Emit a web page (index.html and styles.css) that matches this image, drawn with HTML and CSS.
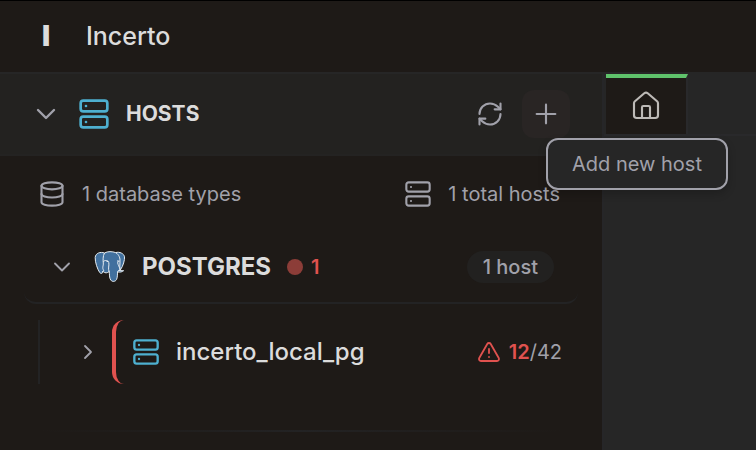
FILE: index.html
```html
<!DOCTYPE html>
<html lang="en">
<head>
<meta charset="utf-8">
<title>Incerto</title>
<link rel="stylesheet" href="styles.css">
</head>
<body>
<svg class="defs" aria-hidden="true">
  <symbol id="server" viewBox="0 0 24 24"><rect x="2" y="2" width="20" height="8" rx="2"/><rect x="2" y="14" width="20" height="8" rx="2"/><path d="M6 6h.01M6 18h.01"/></symbol>
  <symbol id="chevron-down" viewBox="0 0 24 24"><path d="m6 9 6 6 6-6"/></symbol>
  <symbol id="chevron-right" viewBox="0 0 24 24"><path d="m9 18 6-6-6-6"/></symbol>
</svg>
<div class="app">
  <header class="topbar">
    <span class="logo">I</span>
    <span class="brand">Incerto</span>
  </header>
  <div class="workspace">
    <aside class="sidebar">
      <div class="panel-head">
        <button class="toggle" aria-label="Collapse hosts"><svg class="icon i32"><use href="#chevron-down"/></svg></button>
        <svg class="icon i32 blue"><use href="#server"/></svg>
        <h1 class="panel-title">HOSTS</h1>
        <div class="actions">
          <button class="action" aria-label="Refresh"><svg class="icon i28" viewBox="0 0 24 24"><path d="M3 12a9 9 0 0 1 9-9 9.75 9.75 0 0 1 6.74 2.74L21 8"/><path d="M21 3v5h-5"/><path d="M21 12a9 9 0 0 1-9 9 9.75 9.75 0 0 1-6.74-2.74L3 16"/><path d="M8 16H3v5"/></svg></button>
          <div class="tip-anchor">
            <button class="action active" aria-label="Add host" aria-describedby="tip"><svg class="icon i32 thin" viewBox="0 0 24 24"><path d="M5 12h14M12 5v14"/></svg></button>
            <div class="tooltip" role="tooltip" id="tip">Add new host</div>
          </div>
        </div>
      </div>
      <div class="stats">
        <span class="stat"><svg class="icon i28" viewBox="0 0 24 24"><ellipse cx="12" cy="5" rx="9" ry="3"/><path d="M3 5v14a9 3 0 0 0 18 0V5"/><path d="M3 12a9 3 0 0 0 18 0"/></svg>1 database types</span>
        <span class="stat"><svg class="icon i28"><use href="#server"/></svg>1 total hosts</span>
      </div>
      <div class="group">
        <button class="toggle" aria-label="Collapse Postgres"><svg class="icon i28 thin"><use href="#chevron-down"/></svg></button>
        <svg class="elephant" viewBox="0 0 32 32" aria-hidden="true">
          <path class="shape" d="M10.500 2C6.500 .500 1.500 2 1.200 6.500c-.200 4.500 2.100 11.500 4.500 15 1.300 1.500 2.500 1 3.800-.800 1.500 1.600 3.700 1.500 5.700-.200.400 2.600-.100 6.200 1.600 8.600 1.500 2 4.500 1.600 5.700-.500 1.100-2.300.8-5 1.100-7.700 2.300.5 4.800 0 6-1.200-1-.4-2.500.200-3.400-.5 3.100-4.500 4.600-10.300 4.300-13.400C30 2.600 25.500.4 21.700 1.600 18 .4 14 .1 10.500 2z"/>
          <path class="line" d="M10.500 2C8.800 5 9 9.500 9.300 12c.3 3-1.600 4.600.6 7.800M9.200 10.500c2-1.500 5-1.500 5.600 1.200.6 3-1.100 5.500.4 9.200M21.700 1.600c3.500 2.200 4.600 5.700 4.300 9.100-.3 3.300-.2 6.100.2 8.900M25.800 10c-2.100.1-2.500 1.300-1.700 3.400.8 2 1.800 3.500 2 6.200M9.900 19.800l-2 1.200M23.600 21.300c0-1.500.7-2.300 2.600-1.700"/>
          <path class="line" d="M12.500 10.500h1.800M23 10h1.800"/>
        </svg>
        <h2 class="group-name">POSTGRES</h2>
        <span class="dot"></span>
        <span class="issues">1</span>
        <span class="pill">1 host</span>
      </div>
      <div class="tree">
        <button class="toggle" aria-label="Expand incerto_local_pg"><svg class="icon i24"><use href="#chevron-right"/></svg></button>
        <div class="host">
          <svg class="icon i28 blue"><use href="#server"/></svg>
          <span class="host-name">incerto_local_pg</span>
          <span class="alerts"><svg class="icon i24" viewBox="0 0 24 24"><path d="m21.730 18-8-14a2 2 0 0 0-3.480 0l-8 14A2 2 0 0 0 4 21h16a2 2 0 0 0 1.730-3M12 9v4M12 17h.01"/></svg><span><b>12</b><span class="total">/42</span></span></span>
        </div>
      </div>
      <hr class="divider">
    </aside>
    <main class="content">
      <nav class="tabs">
        <button class="tab" aria-label="Home"><svg class="icon i32 thin" viewBox="0 0 24 24"><path d="M15 21v-8a1 1 0 0 0-1-1h-4a1 1 0 0 0-1 1v8"/><path d="M3 10a2 2 0 0 1 .709-1.528l7-6a2 2 0 0 1 2.582 0l7 6A2 2 0 0 1 21 10v9a2 2 0 0 1-2 2H5a2 2 0 0 1-2-2z"/></svg></button>
      </nav>
    </main>
  </div>
</div>
</body>
</html>
```
FILE: styles.css
```css
* { box-sizing: border-box; }
body {
  margin: 0;
  background: #1e1a17;
  color: #a1a1aa;
  font: 20px/32px Inter, "Liberation Sans", sans-serif;
}
button {
  display: flex;
  align-items: center;
  justify-content: center;
  padding: 0;
  border: 0;
  background: none;
  color: inherit;
}
h1, h2 { margin: 0; }
.defs { position: absolute; width: 0; height: 0; }
.icon {
  display: block;
  flex: none;
  fill: none;
  stroke: currentColor;
  stroke-width: 1.8;
  stroke-linecap: round;
  stroke-linejoin: round;
}
.thin { stroke-width: 1.6; }
.i24 { width: 24px; height: 24px; }
.i28 { width: 28px; height: 28px; }
.i32 { width: 32px; height: 32px; }
.blue { color: #4eb0d0; stroke-width: 2; }

.app { display: flex; flex-direction: column; min-height: 100vh; }
.topbar {
  display: flex;
  align-items: center;
  height: 74px;
  padding: 0 42px 2px;
  border-top: 1px solid #000;
  border-bottom: 2px solid #262626;
  color: #dcdcdc;
}
.logo { width: 44px; font-weight: 900; font-size: 28px; }
.brand { font-size: 25px; font-weight: 500; }
.workspace { display: flex; flex: 1; }

.sidebar { width: 604px; flex: none; border-right: 2px solid #262628; }
.panel-head {
  display: flex;
  align-items: center;
  height: 82px;
  padding: 0 32px 0 30px;
  border-bottom: 2px solid #242322;
  background: #232220;
}
.panel-head .blue { margin: 0 16px; }
.panel-title { color: #dcdcdc; font-size: 21px; font-weight: 700; }
.actions { display: flex; gap: 8px; margin-left: auto; }
.action { width: 48px; height: 48px; border-radius: 12px; }
.active { background: #292524; }
.tip-anchor { position: relative; }
.tooltip {
  position: absolute;
  z-index: 2;
  top: 48px;
  left: 24px;
  padding: 8px 24px;
  border: 2px solid #a1a1aa;
  border-radius: 12px;
  background: #262626;
  box-shadow: 0 4px 8px #0003;
  white-space: nowrap;
}

.stats { display: flex; justify-content: space-between; padding: 22px 42px 22px 38px; }
.stat { display: flex; align-items: center; gap: 16px; }
.group {
  display: flex;
  align-items: center;
  height: 72px;
  margin: 0 24px;
  padding: 0 24px;
  border-bottom: 2px solid #232324;
  border-radius: 12px;
}
.elephant { width: 32px; height: 32px; margin: 0 16px 0 18px; }
.shape { fill: #41709e; stroke: #e6edf2; stroke-width: 1; }
.line { fill: none; stroke: #e6edf2; stroke-width: 1; }
.group-name { color: #dcdcdc; font-size: 24px; font-weight: 700; }
.dot { width: 16px; height: 16px; margin: 0 8px 0 16px; border-radius: 50%; background: #8c3d38; }
.issues { color: #e0524f; font-weight: 600; }
.pill {
  margin-left: auto;
  padding: 0 16px;
  border-radius: 16px;
  background: #222120;
  font-weight: 500;
}
.tree {
  display: flex;
  align-items: center;
  margin: 16px 24px 0 38px;
  padding-left: 36px;
  border-left: 2px solid #232324;
}
.host {
  display: flex;
  flex: 1;
  align-items: center;
  height: 64px;
  margin-left: 12px;
  padding: 0 16px;
  border-left: 4px solid #e0524f;
  border-radius: 12px;
}
.host-name { margin-left: 16px; color: #dcdcdc; font-size: 24px; font-weight: 500; }
.alerts { display: flex; align-items: center; gap: 8px; margin-left: auto; color: #e0524f; }
.alerts b { font-weight: 600; }
.total { color: #a1a1aa; }
.divider {
  height: 2px;
  margin: 46px 40px 0;
  border: 0;
  background: linear-gradient(90deg, transparent, #232324, transparent);
}

.content { flex: 1; min-width: 0; background: #262626; }
.tabs { display: flex; height: 62px; padding-left: 2px; border-bottom: 2px solid #29292b; }
.tab {
  width: 82px;
  border-top: 4px solid #5fc26b;
  border-right: 2px solid #29292b;
  background: #1e1a17;
  color: #bdbab7;
}
```
